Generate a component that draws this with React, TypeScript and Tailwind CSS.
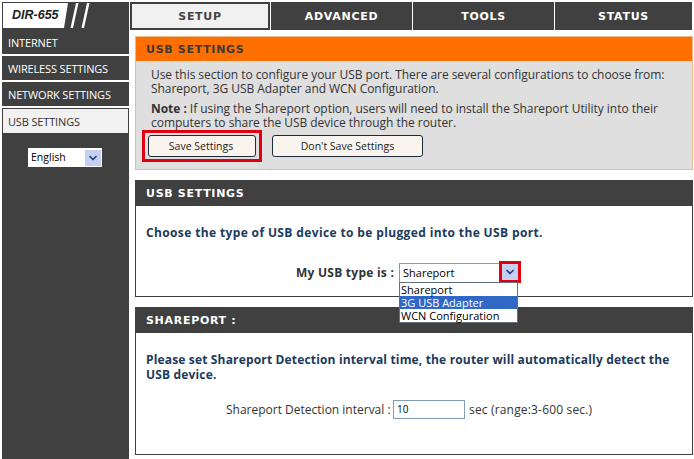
import {ChevronDown} from 'lucide-react';

const sideItems = ['INTERNET', 'WIRELESS SETTINGS', 'NETWORK SETTINGS'];
const tabs = [
    {label: 'ADVANCED', width: 'w-[142px]'},
    {label: 'TOOLS', width: 'w-[142px]'},
    {label: 'STATUS', width: 'w-[138px]'},
];

const headFont = "font-['DejaVu_Sans'] font-bold text-[11px] tracking-[0.7px] pt-[2px]";
const boldFont = "font-['Open_Sans'] text-[12px] font-bold";

function SelectArrow() {
    return (
        <span className="flex h-[16px] w-[16px] items-center justify-center bg-[#c3d0f2]">
            <ChevronDown className="h-[12px] w-[12px] text-[#2a3f80]" strokeWidth={3.5}/>
        </span>
    );
}

function Logo() {
    return (
        <div className="relative flex h-[27px] w-[127px] items-center bg-[#404040] pl-[10px]">
            <svg className="absolute left-0 top-0 h-[27px] w-[127px]" viewBox="0 0 127 27" aria-hidden="true">
                <polygon points="1,1 66,1 62,26 1,26" fill="#fff"/>
                <polygon points="74,1 76.5,1 71,26 68.5,26" fill="#fff"/>
                <polygon points="85,1 87.5,1 82,26 79.5,26" fill="#fff"/>
            </svg>
            <span className="relative font-['Liberation_Sans'] text-[12.5px] font-bold italic text-[#222]">DIR-655</span>
        </div>
    );
}

function Sidebar() {
    return (
        <aside className="flex h-[429px] w-[127px] flex-col bg-[#404040] font-['Open_Sans'] text-[11px] text-white">
            {sideItems.map((item) => (
                <div key={item} className="flex h-[26px] items-center border-b-2 border-white pl-[6px] pt-[3px] tracking-[-0.15px]">
                    {item}
                </div>
            ))}
            <div className="flex h-[26px] items-center border border-[#404040] bg-[#f1f1f1] pl-[5px] pt-[3px] text-[#333] tracking-[-0.15px]">
                USB SETTINGS
            </div>
            <div className="ml-[26px] mt-[14px] flex h-[19px] w-[74px] items-center justify-between bg-white pl-[3px] pr-[1px] text-[10.5px] text-black">
                English
                <SelectArrow/>
            </div>
        </aside>
    );
}

function Intro() {
    return (
        <section className="h-[134px] border border-[#e8ba8c] bg-[#dfdfdf] font-['Open_Sans'] text-[12px] leading-[14px] text-[#333]">
            <h2 className={`flex h-[24px] items-center bg-[#ff6f00] pl-[10px] text-[#3a3a3a] ${headFont}`}>USB SETTINGS</h2>
            <p className="ml-[15px] mt-[7px] tracking-[-0.05px]">
                Use this section to configure your USB port. There are several configurations to choose from:<br/>
                Shareport, 3G USB Adapter and WCN Configuration.
            </p>
            <p className="ml-[15px] mt-[6px] tracking-[-0.04px]">
                <b className="font-bold">Note :</b> If using the Shareport option, users will need to install the Shareport Utility into their<br/>
                computers to share the USB device through the router.
            </p>
            <div className="ml-[6px] flex items-center gap-[10px]">
                <div className="border-[3px] border-[#e0000f] px-[3px] py-[2px]">
                    <button type="button" className="block h-[22px] w-[108px] rounded-[3px] border border-[#1d2a38] bg-[#f9f5ee] pr-[2px] text-[10.5px] text-[#222]">
                        Save Settings
                    </button>
                </div>
                <button type="button" className="h-[22px] w-[151px] rounded-[3px] border border-[#1d2a38] bg-[#f9f5ee] text-[10.5px] text-[#222]">
                    Don't Save Settings
                </button>
            </div>
        </section>
    );
}

function UsbType() {
    return (
        <section className="mt-[10px] h-[117px] border border-[#404040] bg-white">
            <h2 className={`flex h-[25px] items-center bg-[#404040] pl-[10px] text-white ${headFont}`}>USB SETTINGS</h2>
            <p className={`ml-[10px] mt-[19px] leading-[15px] tracking-[0.37px] text-[#203a5c] ${boldFont}`}>
                Choose the type of USB device to be plugged into the USB port.
            </p>
            <div className="ml-[160px] mt-[23px] flex items-start">
                <span className={`mt-[2px] w-[103px] leading-[15px] tracking-[0.25px] text-[#333] ${boldFont}`}>My USB type is :</span>
                <div className="relative h-[20px] w-[119px] border border-[#7f9db9] bg-white pl-[3px] font-['Open_Sans'] text-[11px] leading-[18px] text-black">
                    Shareport
                    <div className="absolute left-[99px] top-[-3px] flex h-[22px] w-[22px] items-center justify-center border-[3px] border-[#e0000f]">
                        <SelectArrow/>
                    </div>
                    <ul className="absolute left-[-1px] top-[18px] z-10 w-[119px] border border-[#5f6f80] bg-white leading-[13px]">
                        <li className="pl-[1px]">Shareport</li>
                        <li className="bg-[#3168c6] pl-[1px] text-white">3G USB Adapter</li>
                        <li className="pl-[1px]">WCN Configuration</li>
                    </ul>
                </div>
            </div>
        </section>
    );
}

function Shareport() {
    return (
        <section className="mt-[10px] h-[148px] border border-[#404040] bg-white">
            <h2 className={`flex h-[25px] items-center bg-[#404040] pl-[10px] text-white ${headFont}`}>SHAREPORT :</h2>
            <p className={`ml-[10px] mt-[19px] w-[540px] leading-[15px] tracking-[0.16px] text-[#203a5c] ${boldFont}`}>
                Please set Shareport Detection interval time, the router will automatically detect the USB device.
            </p>
            <div className="ml-[90px] mt-[18px] flex items-center font-['Open_Sans'] text-[12px] text-[#333]">
                <span className="w-[167px]">Shareport Detection interval :</span>
                <div className="flex h-[19px] w-[72px] items-center border border-[#7f9db9] pl-[3px] text-[10px] text-black">10</div>
                <span className="ml-[4px] tracking-[0.17px]">sec (range:3-600 sec.)</span>
            </div>
        </section>
    );
}

export default function App() {
    return (
        <div className="h-[459px] w-[694px] overflow-hidden bg-white pl-[2px] pt-[2px]">
            <header className="flex h-[28px]">
                <div className="mr-[1px] w-[127px] bg-[#404040]">
                    <Logo/>
                </div>
                <div className={`flex h-[28px] w-[140px] items-center justify-center border-2 border-[#404040] bg-[#f1f1f1] text-[#444] ${headFont}`}>
                    SETUP
                </div>
                {tabs.map((tab) => (
                    <div key={tab.label} className={`flex h-[28px] items-center justify-center border-l border-white bg-[#404040] text-white ${tab.width} ${headFont}`}>
                        {tab.label}
                    </div>
                ))}
            </header>
            <div className="flex">
                <Sidebar/>
                <main className="ml-[6px] mt-[6px] w-[558px]">
                    <Intro/>
                    <UsbType/>
                    <Shareport/>
                </main>
            </div>
        </div>
    );
}
